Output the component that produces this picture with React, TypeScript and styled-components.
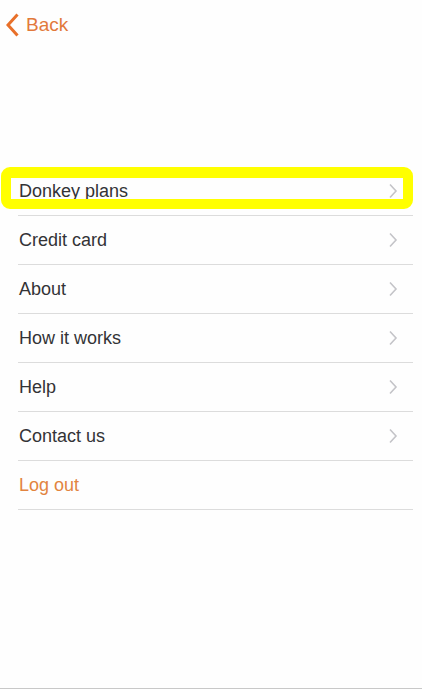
import React from 'react';
import styled, { createGlobalStyle } from 'styled-components';

const GlobalStyle = createGlobalStyle`
  html, body {
    margin: 0;
    padding: 0;
    background: #fefefe;
    font-family: 'Liberation Sans', Arial, sans-serif;
  }
`;

const Screen = styled.div`
  height: 689px;
  box-sizing: border-box;
  border-bottom: 1px solid #c8c8c8;
  display: flex;
  flex-direction: column;
`;

const NavBar = styled.div`
  height: 50px;
  display: flex;
  align-items: flex-start;
  padding: 13px 0 0 6px;
  box-sizing: border-box;
`;

const BackButton = styled.button`
  display: flex;
  align-items: center;
  gap: 6px;
  background: none;
  border: none;
  padding: 0;
  color: #e2793a;
  font-family: 'Liberation Sans', Arial, sans-serif;
  font-size: 19px;
  cursor: pointer;
`;

const Menu = styled.ul`
  list-style: none;
  margin: 117px 9px 0 18px;
  padding: 0;
`;

const Row = styled.li`
  position: relative;
  height: 48px;
  border-bottom: 1px solid #dcdcdc;
  display: flex;
  align-items: center;
  justify-content: space-between;
  padding: 0 15px 0 1px;
`;

const Label = styled.span<{ $accent?: boolean }>`
  font-size: 18px;
  color: ${p => (p.$accent ? '#e2843f' : '#333336')};
`;

const Highlight = styled.div`
  position: absolute;
  left: -17px;
  right: 0;
  top: 0;
  height: 42px;
  box-sizing: border-box;
  border: 10px solid #ffff00;
  border-top-width: 11px;
  border-radius: 9px;
  pointer-events: none;
`;

const Chevron = () => (
  <svg width="10" height="16" viewBox="0 0 10 16">
    <path d="M2 1.5 L8 8 L2 14.5" fill="none" stroke="#c4c4c8" strokeWidth="1.6" />
  </svg>
);

const BackChevron = () => (
  <svg width="14" height="24" viewBox="0 0 14 24">
    <path d="M11.5 1.5 L2 12 L11.5 22.5" fill="none" stroke="#e8702a" strokeWidth="3" />
  </svg>
);

const items = ['Donkey plans', 'Credit card', 'About', 'How it works', 'Help', 'Contact us'];

export default function App() {
  return (
    <>
      <GlobalStyle />
      <Screen>
        <NavBar>
          <BackButton>
            <BackChevron />
            Back
          </BackButton>
        </NavBar>
        <Menu>
          {items.map((item, i) => (
            <Row key={item}>
              <Label>{item}</Label>
              <Chevron />
              {i === 0 && <Highlight />}
            </Row>
          ))}
          <Row>
            <Label $accent>Log out</Label>
          </Row>
        </Menu>
      </Screen>
    </>
  );
}
